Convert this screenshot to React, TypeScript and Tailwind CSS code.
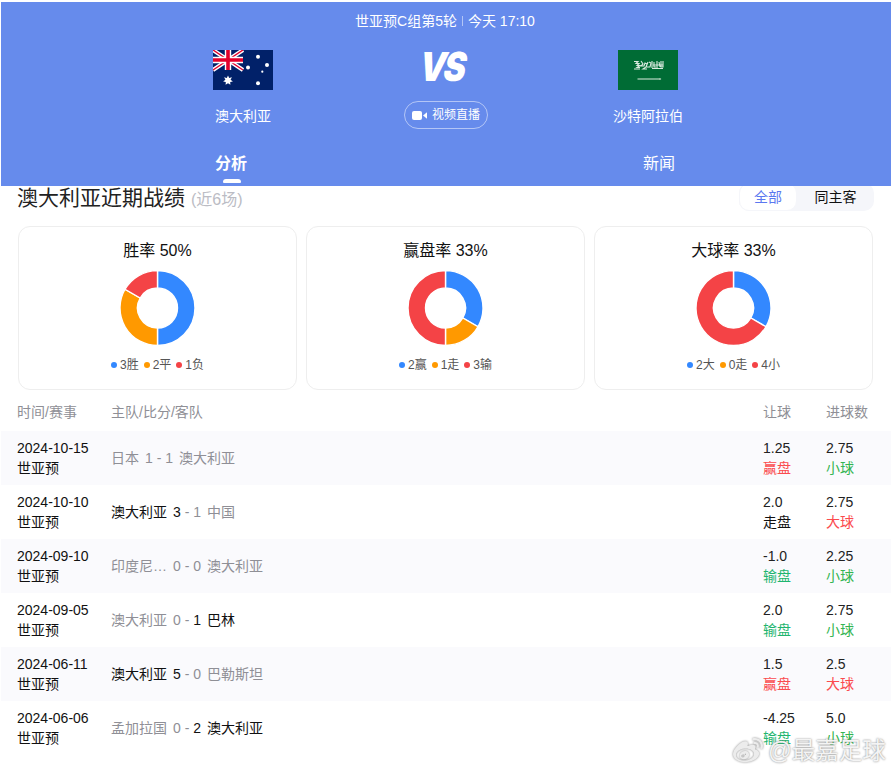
import React from "react";
import { FaWeibo } from "react-icons/fa";

const font = "[font-family:'Liberation_Sans','Noto_Sans_CJK_SC',sans-serif]";

const BLUE = "#3388ff";
const ORANGE = "#ff9900";
const RED = "#f44346";

// one ring slice, angles in degrees from 12 o'clock going clockwise
const slice = (from: number, to: number) => {
  const c = 37.5;
  const R = 37.5;
  const r = 20;
  const pt = (rad: number, deg: number) => {
    const a = ((deg - 90) * Math.PI) / 180;
    return `${c + rad * Math.cos(a)} ${38 + rad * Math.sin(a)}`;
  };
  const large = to - from > 180 ? 1 : 0;
  return `M${pt(R, from)} A${R} ${R} 0 ${large} 1 ${pt(R, to)} L${pt(r, to)} A${r} ${r} 0 ${large} 0 ${pt(r, from)} Z`;
};

const Donut = ({ values }: { values: number[] }) => {
  const colors = [BLUE, ORANGE, RED];
  const total = values.reduce((a, b) => a + b, 0);
  let at = 0;
  return (
    <svg width="76" height="76" viewBox="0 0 76 76">
      {values.map((v, i) => {
        const from = at;
        at += (v / total) * 360;
        if (v === 0) return null;
        return <path key={i} d={slice(from, at)} fill={colors[i]} stroke="#fff" strokeWidth="1.4" />;
      })}
    </svg>
  );
};

const cards = [
  { title: "胜率 50%", values: [3, 2, 1], legend: ["3胜", "2平", "1负"] },
  { title: "赢盘率 33%", values: [2, 1, 3], legend: ["2赢", "1走", "3输"] },
  { title: "大球率 33%", values: [2, 0, 4], legend: ["2大", "0走", "4小"] },
];

const GRAY = "text-[#8f8f96]";
const DARK = "text-[#111]";

type Row = {
  date: string;
  home: string;
  hs: string;
  as: string;
  away: string;
  homeDark?: boolean;
  awayDark?: boolean;
  hc: string;
  hcRes: string;
  goals: string;
  goalRes: string;
};

const rows: Row[] = [
  { date: "2024-10-15", home: "日本", hs: "1", as: "1", away: "澳大利亚", hc: "1.25", hcRes: "赢盘", goals: "2.75", goalRes: "小球" },
  { date: "2024-10-10", home: "澳大利亚", hs: "3", as: "1", away: "中国", homeDark: true, hc: "2.0", hcRes: "走盘", goals: "2.75", goalRes: "大球" },
  { date: "2024-09-10", home: "印度尼西亚", hs: "0", as: "0", away: "澳大利亚", hc: "-1.0", hcRes: "输盘", goals: "2.25", goalRes: "小球" },
  { date: "2024-09-05", home: "澳大利亚", hs: "0", as: "1", away: "巴林", awayDark: true, hc: "2.0", hcRes: "输盘", goals: "2.75", goalRes: "小球" },
  { date: "2024-06-11", home: "澳大利亚", hs: "5", as: "0", away: "巴勒斯坦", homeDark: true, hc: "1.5", hcRes: "赢盘", goals: "2.5", goalRes: "大球" },
  { date: "2024-06-06", home: "孟加拉国", hs: "0", as: "2", away: "澳大利亚", awayDark: true, hc: "-4.25", hcRes: "输盘", goals: "5.0", goalRes: "小球" },
];

const resColor = (res: string) => {
  if (res === "赢盘" || res === "大球") return "text-[#fb4b4e]";
  if (res === "输盘") return "text-[#1fb56f]";
  if (res === "小球") return "text-[#35b552]";
  return "text-[#111]";
};

const AuFlag = () => (
  <svg width="60" height="40" viewBox="0 0 60 40">
    <rect width="60" height="40" fill="#012169" />
    <path d="M0 0 30 20M30 0 0 20" stroke="#fff" strokeWidth="4" />
    <path d="M0 0 30 20M30 0 0 20" stroke="#e4002b" strokeWidth="1.4" />
    <path d="M15 0V20M0 10H30" stroke="#fff" strokeWidth="6.4" />
    <path d="M15 0V20M0 10H30" stroke="#e4002b" strokeWidth="3.6" />
    <path
      d="M15 25.5 16.2 28 18.9 27.3 17.6 29.8 19.9 31.4 17.2 32 17.4 34.8 15 33.2 12.6 34.8 12.8 32 10.1 31.4 12.4 29.8 11.1 27.3 13.8 28Z"
      fill="#fff"
    />
    <circle cx="45" cy="6.7" r="2" fill="#fff" />
    <circle cx="54" cy="15" r="2" fill="#fff" />
    <circle cx="35" cy="17.5" r="2" fill="#fff" />
    <circle cx="49.3" cy="21.7" r="1.1" fill="#fff" />
    <circle cx="45" cy="33.3" r="2" fill="#fff" />
  </svg>
);

const SaFlag = () => (
  <svg width="60" height="40" viewBox="0 0 60 40">
    <defs>
      <filter id="soft" x="-10%" y="-10%" width="120%" height="120%">
        <feGaussianBlur stdDeviation="0.35" />
      </filter>
    </defs>
    <rect width="60" height="40" fill="#006c35" />
    <g filter="url(#soft)" fill="none" stroke="#f1f7f2" strokeWidth="1.1" opacity="0.9">
      <path d="M16 11.5h4l-2 2h3l-2 2h3l-3 2h3M16 19h6" />
      <path d="M23 11l2 3-2 2h3l1-3 2 1-1 3-3 2h4M30 12l-2 5h4l1-4-2-1" />
      <path d="M34 11v7M36 12v5h2M39 11v7M41 12l1 5M43 11v6h2v-6M35 15h10M34 18.500h11" />
    </g>
    <path d="M19.5 29H41" stroke="#dcebe0" strokeWidth="1" />
    <path d="M41 28.2h1.500l.8.8-.8.8H41Z" fill="#bcd8c5" />
  </svg>
);

const App = () => {
  return (
    <div className={`relative h-[770px] w-[894px] overflow-hidden bg-white pl-[1px] pt-[2px] ${font}`}>
      <div className="relative z-10 h-[184px] w-[890px] bg-[#668bec] text-white">
        <div className="flex h-[38px] items-center justify-center pr-[2px] text-sm">
          <span>世亚预C组第5轮</span>
          <span className="mx-[5px] h-[10px] w-px bg-white/50" />
          <span>今天 17:10</span>
        </div>
        <div className="flex h-[92px] pl-[182px]">
          <div className="flex w-[120px] flex-col items-center pt-[10px]">
            <AuFlag />
            <div className="mt-[16px] text-sm leading-5">澳大利亚</div>
          </div>
          <div className="flex w-[285px] flex-col items-center pl-[1px]">
            <div className="mr-[6px] h-[61px] origin-center -skew-x-[6deg] scale-x-[0.84] pr-[3px] text-[40px] font-black italic leading-[54px] tracking-[-3px] [font-family:Inter,sans-serif]">
              VS
            </div>
            <div className="flex h-[28px] w-[84px] items-center justify-center gap-[5px] rounded-full border border-white/50 text-xs">
              <svg width="15" height="9" viewBox="0 0 15 9">
                <rect width="10" height="9" rx="2" fill="#fff" />
                <path d="M11 4.500 15 1.200V7.800Z" fill="#fff" />
              </svg>
              <span>视频直播</span>
            </div>
          </div>
          <div className="flex w-[120px] flex-col items-center pt-[10px]">
            <SaFlag />
            <div className="mt-[16px] text-sm leading-5">沙特阿拉伯</div>
          </div>
        </div>
        <div className="grid h-[54px] grid-cols-2 pl-[16px] pr-[18px]">
          <div className="relative flex items-center justify-center pt-[9px] text-base font-bold">
            分析
            <span className="absolute bottom-[3px] left-[calc(50%+1px)] h-[4px] w-[18px] -translate-x-1/2 rounded-t-[3px] rounded-b-[1px] bg-white" />
          </div>
          <div className="flex items-center justify-center pt-[9px] text-base">新闻</div>
        </div>
      </div>

      <div className="-mt-[3px] flex h-[28px] w-[890px] items-center justify-between pl-[16px] pr-[17px]">
        <div className="flex items-baseline pt-[2px]">
          <span className="text-[21px] leading-7 text-[#222]">澳大利亚近期战绩</span>
          <span className="ml-[6px] text-base text-[#bbbcc4]">(近6场)</span>
        </div>
        <div className="flex h-[28px] w-[135px] rounded-[10px] bg-[#f5f6fa] text-sm">
          <div className="flex w-[58px] items-center justify-center rounded-[10px] border border-[#f5f6fa] bg-white text-[#5b78f0]">全部</div>
          <div className="flex flex-1 items-center justify-center text-[#111]">同主客</div>
        </div>
      </div>

      <div className="mt-[15px] grid w-[890px] grid-cols-3 gap-[9px] pl-[17px] pr-[18px]">
        {cards.map((c) => (
          <div key={c.title} className="flex h-[164px] flex-col items-center rounded-[12px] border border-[#eeeeee] pt-[14px]">
            <div className="h-[20px] text-base leading-5 text-[#111]">{c.title}</div>
            <div className="mt-[9px] h-[76px]">
              <Donut values={c.values} />
            </div>
            <div className="mt-[11px] flex items-center gap-[5px] text-xs leading-4 text-[#555]">
              {c.legend.map((l, i) => (
                <div key={l} className="flex items-center gap-[3px]">
                  <span className={`h-[6px] w-[6px] rounded-full ${i === 0 ? "bg-[#3388ff]" : i === 1 ? "bg-[#ff9900]" : "bg-[#f44346]"}`} />
                  {l}
                </div>
              ))}
            </div>
          </div>
        ))}
      </div>

      <div className={`grid h-[41px] w-[890px] grid-cols-[94px_1fr_63px_47px] items-center pl-[16px] pr-[18px] pt-[3px] text-sm ${GRAY}`}>
        <div>时间/赛事</div>
        <div>主队/比分/客队</div>
        <div>让球</div>
        <div>进球数</div>
      </div>

      {rows.map((r, i) => (
        <div
          key={r.date}
          className={`grid h-[54px] w-[890px] grid-cols-[94px_1fr_63px_47px] items-center pl-[16px] pr-[18px] text-sm leading-5 ${i % 2 === 0 ? "bg-[#fafafd]" : "bg-white"}`}
        >
          <div className="text-[#111]">
            <div>{r.date}</div>
            <div>世亚预</div>
          </div>
          <div className="flex items-center">
            <span className={`max-w-[56px] truncate ${r.homeDark ? DARK : GRAY}`}>{r.home}</span>
            <span className="mx-[6px]">
              <span className={r.homeDark ? DARK : GRAY}>{r.hs}</span>
              <span className={GRAY}> - </span>
              <span className={r.awayDark ? DARK : GRAY}>{r.as}</span>
            </span>
            <span className={r.awayDark ? DARK : GRAY}>{r.away}</span>
          </div>
          <div>
            <div className="text-[#222]">{r.hc}</div>
            <div className={resColor(r.hcRes)}>{r.hcRes}</div>
          </div>
          <div>
            <div className="text-[#222]">{r.goals}</div>
            <div className={resColor(r.goalRes)}>{r.goalRes}</div>
          </div>
        </div>
      ))}

      <div className="absolute left-[730px] top-[736px] z-20 flex items-center gap-[2px] text-[#f4f4f4]">
        <FaWeibo className="h-[30px] w-[36px] text-[#ececec] [filter:drop-shadow(0_0_1px_#888)]" />
        <span className="text-[23.5px] leading-[28px] [text-shadow:0_0_2px_#777]">@最嘉足球</span>
      </div>
    </div>
  );
};

export default App;
